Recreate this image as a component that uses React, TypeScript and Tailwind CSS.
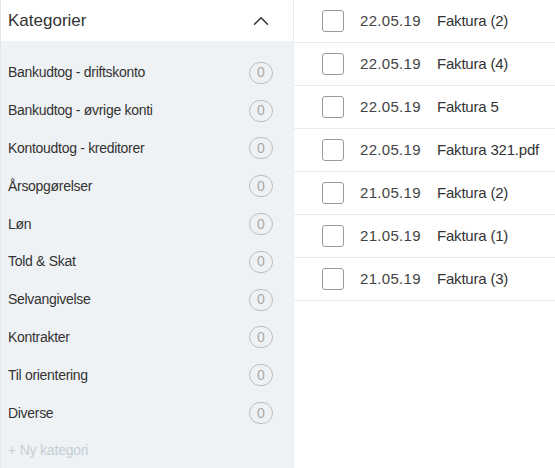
import { ChevronUp } from 'lucide-react';

const categories = [
  'Bankudtog - driftskonto',
  'Bankudtog - øvrige konti',
  'Kontoudtog - kreditorer',
  'Årsopgørelser',
  'Løn',
  'Told & Skat',
  'Selvangivelse',
  'Kontrakter',
  'Til orientering',
  'Diverse',
];

const documents = [
  { date: '22.05.19', name: 'Faktura (2)' },
  { date: '22.05.19', name: 'Faktura (4)' },
  { date: '22.05.19', name: 'Faktura 5' },
  { date: '22.05.19', name: 'Faktura 321.pdf' },
  { date: '21.05.19', name: 'Faktura (2)' },
  { date: '21.05.19', name: 'Faktura (1)' },
  { date: '21.05.19', name: 'Faktura (3)' },
];

export default function App() {
  return (
    <div className="flex w-[555px] h-[468px] overflow-hidden bg-white text-[#333] font-['Liberation_Sans',Arial,sans-serif]">
      <div className="w-[293px] shrink-0 flex flex-col border-l border-[#e4e7ea]">
        <div className="h-[41px] shrink-0 flex items-center justify-between pl-[7px] pr-[19px] bg-white">
          <span className="text-[17px] text-[#333]">Kategorier</span>
          <ChevronUp size={26} strokeWidth={1.4} className="text-[#333]" />
        </div>
        <div className="flex-1 bg-[#eff2f4] pt-[13px]">
          {categories.map((c) => (
            <div key={c} className="h-[37.8px] flex items-center justify-between pl-[7px] pr-[20px]">
              <span className="text-[14px] tracking-[-0.3px] text-[#333]">{c}</span>
              <span className="w-[24px] h-[22px] rounded-full border border-[#bdbdbd] flex items-center justify-center text-[14px] text-[#a8a8a8]">
                0
              </span>
            </div>
          ))}
          <div className="h-[38px] flex items-center pl-[7px] text-[14px] tracking-[-0.2px] text-[#c5cfd6]">+ Ny kategori</div>
        </div>
      </div>
      <div className="flex-1 border-l border-[#e8ebef]">
        {documents.map((d, i) => (
          <div key={i} className="h-[43px] flex items-center border-b border-[#e9edf2] pl-[28px]">
            <span className="w-[22px] h-[22px] rounded-[3px] border border-[#9a9a9a] bg-white shrink-0" />
            <span className="ml-[16px] w-[77px] text-[15px] tracking-[0.3px] text-[#444]">{d.date}</span>
            <span className="text-[15px] tracking-[-0.2px] text-[#333]">{d.name}</span>
          </div>
        ))}
      </div>
    </div>
  );
}
